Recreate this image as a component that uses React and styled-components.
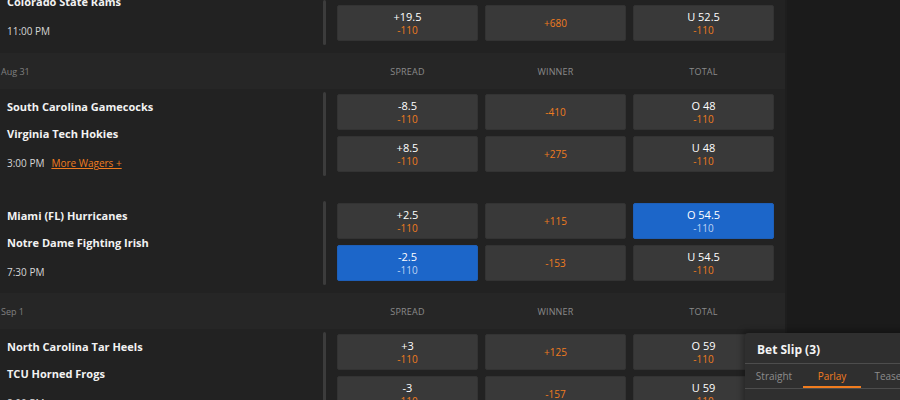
import React from "react";
import styled, { createGlobalStyle } from "styled-components";

const GlobalStyle = createGlobalStyle`
  html, body {
    margin: 0;
    padding: 0;
    background: #1b1b1b;
    overflow: hidden;
  }
  * {
    box-sizing: border-box;
  }
`;

const Page = styled.div`
  position: relative;
  width: 900px;
  height: 400px;
  overflow: hidden;
  display: flex;
  background: #1b1b1b;
  font-family: "Open Sans", "Liberation Sans", sans-serif;
`;

const Board = styled.main`
  width: 787px;
  flex-shrink: 0;
  background: #222222;
  border-right: 2px solid #1e1e1e;
  overflow: hidden;
`;

const DateGroup = styled.section`
  display: flex;
  flex-direction: column;
  gap: 14px;
`;

const GroupHeader = styled.div`
  height: 36px;
  display: grid;
  grid-template-columns: 326px 1fr;
  align-items: center;
  background: #262626;
`;

const DateLabel = styled.span`
  font-size: 9px;
  color: #808080;
  padding-left: 1px;
`;

const ColumnLabels = styled.div`
  display: grid;
  grid-template-columns: repeat(3, 141px);
  column-gap: 7px;
  padding-left: 11px;
`;

const ColumnLabel = styled.span`
  font-size: 9px;
  color: #8a8a8a;
  text-align: center;
  text-transform: uppercase;
  letter-spacing: 0.2px;
`;

const Game = styled.article`
  display: grid;
  grid-template-columns: 323px 3px 1fr;
  padding: 5px 0 12px;
`;

/* the first game is the tail of a card scrolled past the top edge */
const Info = styled.div`
  display: flex;
  flex-direction: column;
  padding: 6px 0 0 7px;
  margin-top: ${(p) => (p.$continued ? "-16px" : "0")};
`;

const Team = styled.div`
  font-size: 11px;
  line-height: 14px;
  font-weight: 700;
  color: #f2f2f2;
  margin-bottom: 13px;
`;

const Meta = styled.div`
  display: flex;
  align-items: center;
  gap: 7px;
  margin-top: 2px;
  font-size: 10px;
  line-height: 14px;
  color: #d6d6d6;
`;

const MoreLink = styled.a`
  color: #f07c1f;
  text-decoration: underline;
  cursor: pointer;
`;

const Divider = styled.div`
  width: 3px;
  margin: ${(p) => (p.$continued ? "-5px 0 -4px" : "-2px 0 -4px")};
  border-radius: 2px;
  background: #3c3c3c;
`;

const Markets = styled.div`
  display: grid;
  grid-template-columns: repeat(3, 141px);
  grid-auto-rows: 36px;
  gap: 6px 7px;
  padding-left: 11px;
`;

const Odd = styled.button`
  display: flex;
  flex-direction: column;
  align-items: center;
  justify-content: center;
  padding: 0;
  border: 1px solid ${(p) => (p.$active ? "#1e5fb8" : "#333333")};
  border-radius: 2px;
  background: ${(p) => (p.$active ? "#1c66c9" : "#393939")};
  font-family: inherit;
  cursor: pointer;
`;

const Line = styled.span`
  display: block;
  font-size: 11px;
  line-height: 14px;
  font-weight: 500;
  color: #ffffff;
`;

const Price = styled.span`
  display: block;
  font-size: 10px;
  line-height: 13px;
  font-weight: 500;
  color: ${(p) => (p.$active ? "#bcd2f2" : "#f07c1f")};
`;

const Slip = styled.aside`
  position: absolute;
  left: 745px;
  top: 333px;
  width: 170px;
  height: 80px;
  background: #2f2f2f;
  border-radius: 3px 0 0 0;
  box-shadow: -2px -2px 6px rgba(0, 0, 0, 0.35);
`;

const SlipTitle = styled.div`
  height: 31px;
  padding: 8px 0 0 12px;
  font-size: 12px;
  font-weight: 700;
  color: #f4f4f4;
  border-bottom: 1px solid #4d4d4d;
`;

const Tabs = styled.div`
  display: grid;
  grid-template-columns: repeat(3, 58px);
  height: 25px;
  border-bottom: 1px solid #4d4d4d;
`;

const Tab = styled.div`
  display: flex;
  align-items: center;
  justify-content: center;
  font-size: 10px;
  color: ${(p) => (p.$active ? "#f07c1f" : "#8c8c8c")};
  box-shadow: ${(p) => (p.$active ? "inset 0 -2px 0 #f07c1f" : "none")};
`;

const groups = [
  {
    date: null,
    games: [
      {
        continued: true,
        teams: ["Colorado State Rams"],
        time: "11:00 PM",
        rows: [[["+19.5", "-110"], [null, "+680"], ["U 52.5", "-110"]]],
      },
    ],
  },
  {
    date: "Aug 31",
    games: [
      {
        teams: ["South Carolina Gamecocks", "Virginia Tech Hokies"],
        time: "3:00 PM",
        more: true,
        rows: [
          [["-8.5", "-110"], [null, "-410"], ["O 48", "-110"]],
          [["+8.5", "-110"], [null, "+275"], ["U 48", "-110"]],
        ],
      },
      {
        teams: ["Miami (FL) Hurricanes", "Notre Dame Fighting Irish"],
        time: "7:30 PM",
        rows: [
          [["+2.5", "-110"], [null, "+115"], ["O 54.5", "-110", true]],
          [["-2.5", "-110", true], [null, "-153"], ["U 54.5", "-110"]],
        ],
      },
    ],
  },
  {
    date: "Sep 1",
    games: [
      {
        teams: ["North Carolina Tar Heels", "TCU Horned Frogs"],
        time: "8:00 PM",
        rows: [
          [["+3", "-110"], [null, "+125"], ["O 59", "-110"]],
          [["-3", "-110"], [null, "-157"], ["U 59", "-110"]],
        ],
      },
    ],
  },
];

function GameRow({ game }) {
  return (
    <Game>
      <Info $continued={game.continued}>
        {game.teams.map((team) => (
          <Team key={team}>{team}</Team>
        ))}
        <Meta>
          <span>{game.time}</span>
          {game.more && <MoreLink>More Wagers +</MoreLink>}
        </Meta>
      </Info>
      <Divider $continued={game.continued} />
      <Markets>
        {game.rows.flat().map(([line, price, active], i) => (
          <Odd key={i} $active={active}>
            {line && <Line>{line}</Line>}
            <Price $active={active}>{price}</Price>
          </Odd>
        ))}
      </Markets>
    </Game>
  );
}

export default function App() {
  return (
    <>
      <GlobalStyle />
      <Page>
        <Board>
          {groups.map((group, gi) => (
            <React.Fragment key={gi}>
              {group.date && (
                <GroupHeader>
                  <DateLabel>{group.date}</DateLabel>
                  <ColumnLabels>
                    <ColumnLabel>Spread</ColumnLabel>
                    <ColumnLabel>Winner</ColumnLabel>
                    <ColumnLabel>Total</ColumnLabel>
                  </ColumnLabels>
                </GroupHeader>
              )}
              <DateGroup>
                {group.games.map((game, i) => (
                  <GameRow key={i} game={game} />
                ))}
              </DateGroup>
            </React.Fragment>
          ))}
        </Board>
        <Slip>
          <SlipTitle>Bet Slip (3)</SlipTitle>
          <Tabs>
            <Tab>Straight</Tab>
            <Tab $active>Parlay</Tab>
            <Tab>Teaser</Tab>
          </Tabs>
        </Slip>
      </Page>
    </>
  );
}
